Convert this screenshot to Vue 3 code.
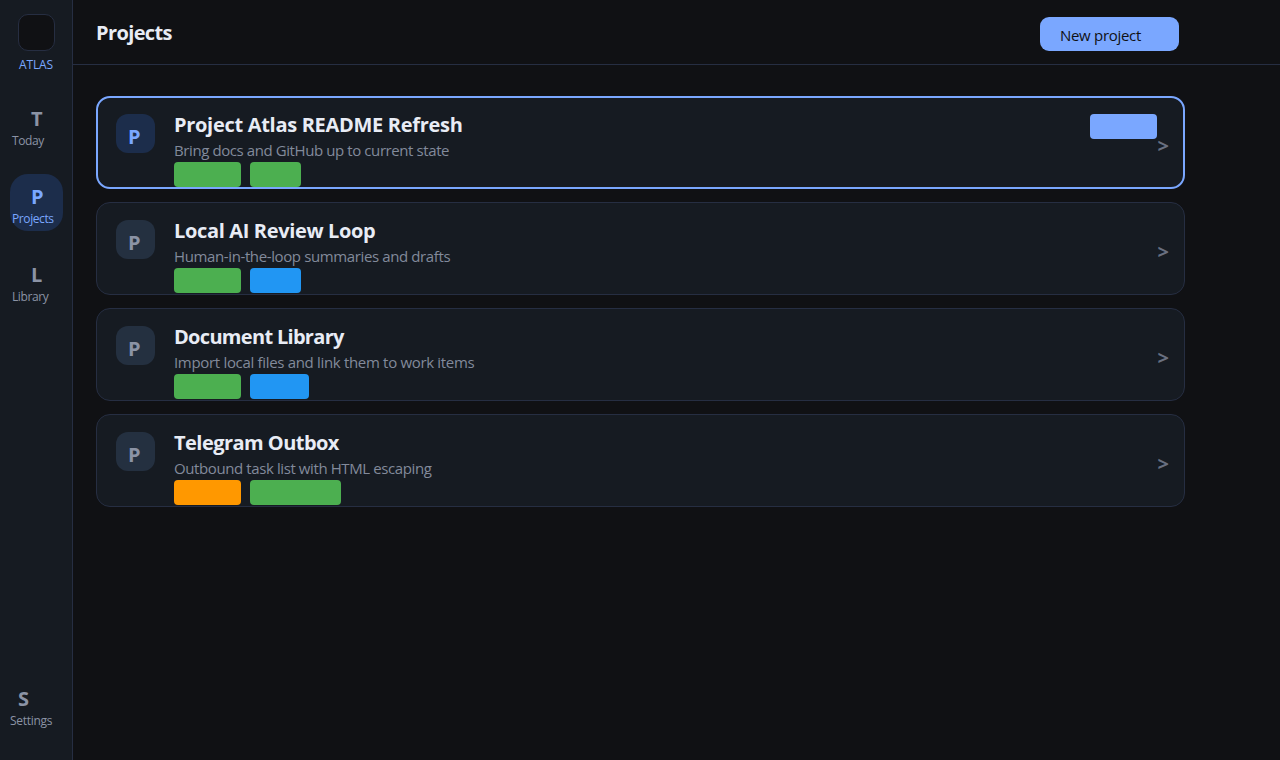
<script setup>
import { ref } from 'vue'

const activeNav = ref('projects')
const selectedId = ref(1)

const navItems = [
  { id: 'today', letter: 'T', label: 'Today' },
  { id: 'projects', letter: 'P', label: 'Projects' },
  { id: 'library', letter: 'L', label: 'Library' }
]

const projects = [
  {
    id: 1,
    key: 'atlas',
    title: 'Project Atlas README Refresh',
    desc: 'Bring docs and GitHub up to current state',
    tags: [{ color: 'green', width: 67 }, { color: 'green', width: 51 }]
  },
  {
    id: 2,
    key: 'review',
    title: 'Local AI Review Loop',
    desc: 'Human-in-the-loop summaries and drafts',
    tags: [{ color: 'green', width: 67 }, { color: 'blue', width: 51 }]
  },
  {
    id: 3,
    key: 'docs',
    title: 'Document Library',
    desc: 'Import local files and link them to work items',
    tags: [{ color: 'green', width: 67 }, { color: 'blue', width: 59 }]
  },
  {
    id: 4,
    key: 'telegram',
    title: 'Telegram Outbox',
    desc: 'Outbound task list with HTML escaping',
    tags: [{ color: 'orange', width: 67 }, { color: 'green', width: 91 }]
  }
]
</script>

<template>
  <div class="app">
    <aside class="sidebar">
      <div class="logo"></div>
      <div class="brand">ATLAS</div>
      <nav class="nav">
        <div
          v-for="item in navItems"
          :key="item.id"
          class="nav-item"
          :class="{ active: activeNav === item.id }"
          @click="activeNav = item.id"
        >
          <span class="nav-letter">{{ item.letter }}</span>
          <span class="nav-label">{{ item.label }}</span>
        </div>
      </nav>
      <div class="settings">
        <span class="nav-letter">S</span>
        <span class="nav-label">Settings</span>
      </div>
    </aside>

    <div class="main">
      <header class="header">
        <h1>Projects</h1>
        <button class="new-btn">New project</button>
      </header>

      <div class="list">
        <div
          v-for="project in projects"
          :key="project.id"
          class="card"
          :class="[project.key, { selected: selectedId === project.id }]"
          @click="selectedId = project.id"
        >
          <div class="card-icon">P</div>
          <div class="card-body">
            <h2>{{ project.title }}</h2>
            <p>{{ project.desc }}</p>
            <div class="tags">
              <span
                v-for="(tag, i) in project.tags"
                :key="i"
                class="tag"
                :class="tag.color"
                :style="{ width: tag.width + 'px' }"
              ></span>
            </div>
          </div>
          <span v-if="selectedId === project.id" class="status"></span>
          <span class="chevron">&gt;</span>
        </div>
      </div>
    </div>
  </div>
</template>

<style>
body {
  background: #101114;
}
</style>

<style scoped>
.app {
  display: flex;
  height: 100vh;
  overflow: hidden;
  background: #101114;
  color: #e8ecf5;
  font-family: "Segoe UI", "Open Sans", "Noto Sans", sans-serif;
}

.sidebar {
  width: 73px;
  flex-shrink: 0;
  box-sizing: border-box;
  padding: 14px 0 31px;
  display: flex;
  flex-direction: column;
  background: #161b22;
  border-right: 1px solid #262e42;
}

.logo {
  width: 37px;
  height: 37px;
  margin-left: 18px;
  box-sizing: border-box;
  background: #101114;
  border: 1px solid #262e42;
  border-radius: 10px;
}

.brand {
  margin: 6px 0 0 19px;
  font-size: 12px;
  line-height: 16px;
  letter-spacing: -0.15px;
  color: #7aa7ff;
}

.nav {
  margin-top: 23px;
  padding-left: 10px;
  display: flex;
  flex-direction: column;
  gap: 21px;
}

.nav-item {
  width: 53px;
  height: 57px;
  box-sizing: border-box;
  padding: 9px 0 0 2px;
  display: flex;
  flex-direction: column;
  border-radius: 18px;
  color: #8b93a5;
  cursor: pointer;
}

.nav-item.active {
  background: #1c2d4b;
  color: #7aa7ff;
}

.nav-letter {
  padding-left: 19px;
  font-size: 20px;
  font-weight: 700;
  line-height: 28px;
}

.nav-label {
  font-size: 12px;
  line-height: 16px;
  letter-spacing: -0.4px;
  white-space: nowrap;
}

.settings {
  margin-top: auto;
  padding-left: 10px;
  display: flex;
  flex-direction: column;
  color: #8b93a5;
}

.settings .nav-letter {
  padding-left: 8px;
}

.settings .nav-label {
  letter-spacing: -0.3px;
}

.main {
  flex: 1;
  min-width: 0;
}

.header {
  height: 65px;
  box-sizing: border-box;
  padding: 0 101px 0 23px;
  display: flex;
  align-items: center;
  justify-content: space-between;
  border-bottom: 1px solid #262e42;
}

.header h1 {
  margin: 2px 0 0;
  font-size: 20px;
  font-weight: 700;
  line-height: 28px;
  letter-spacing: -0.62px;
}

.new-btn {
  width: 139px;
  height: 34px;
  margin-top: 4px;
  padding: 2px 0 0 20px;
  border: none;
  border-radius: 9px;
  background: #7aa7ff;
  color: #101114;
  font-family: inherit;
  font-size: 15px;
  letter-spacing: -0.3px;
  text-align: left;
  cursor: pointer;
}

.list {
  width: 1089px;
  padding: 31px 0 0 23px;
  display: flex;
  flex-direction: column;
  gap: 13px;
}

.card {
  height: 93px;
  box-sizing: border-box;
  padding: 0 14px 0 19px;
  display: flex;
  align-items: flex-start;
  background: #161b22;
  border: 1px solid #262e42;
  border-radius: 14px;
}

.card.selected {
  padding: 0 13px 0 18px;
  border: 2px solid #7aa7ff;
}

.card-icon {
  width: 39px;
  height: 39px;
  margin-top: 17px;
  box-sizing: border-box;
  padding: 9px 0 0 12px;
  border-radius: 12px;
  background: #243040;
  color: #8b93a5;
  font-size: 20px;
  font-weight: 700;
  line-height: 28px;
}

.card-body {
  flex: 1;
  margin: 14px 0 0 19px;
}

.card-body h2 {
  margin: 0;
  font-size: 20px;
  font-weight: 700;
  line-height: 28px;
}

.card-body p {
  margin: 0;
  font-size: 15px;
  line-height: 23px;
  letter-spacing: -0.38px;
  color: #828a9b;
}

.atlas h2 {
  letter-spacing: -0.3px;
}

.atlas p {
  letter-spacing: -0.41px;
}

.review h2 {
  letter-spacing: -0.35px;
}

.docs h2 {
  letter-spacing: -0.69px;
}

.docs p {
  letter-spacing: -0.32px;
}

.telegram h2 {
  letter-spacing: -0.54px;
}

.telegram p {
  letter-spacing: -0.4px;
}

.tags {
  display: flex;
  gap: 9px;
}

.tag,
.status {
  height: 25px;
  border-radius: 4px;
}

.tag.green {
  background: #4caf50;
}

.tag.blue {
  background: #2196f3;
}

.tag.orange {
  background: #ff9800;
}

.status {
  width: 67px;
  margin: 17px 1px 0 0;
  background: #7aa7ff;
}

.chevron {
  width: 12.5px;
  margin-top: 35px;
  color: #697080;
  font-size: 20px;
  font-weight: 700;
  line-height: 28px;
}

.selected .card-icon {
  margin-top: 16px;
  background: #1c2d4b;
  color: #7aa7ff;
}

.selected .card-body {
  margin-top: 13px;
}

.selected .status {
  margin: 16px 0.5px 0 0;
}

.selected .chevron {
  margin-top: 34px;
}
</style>
